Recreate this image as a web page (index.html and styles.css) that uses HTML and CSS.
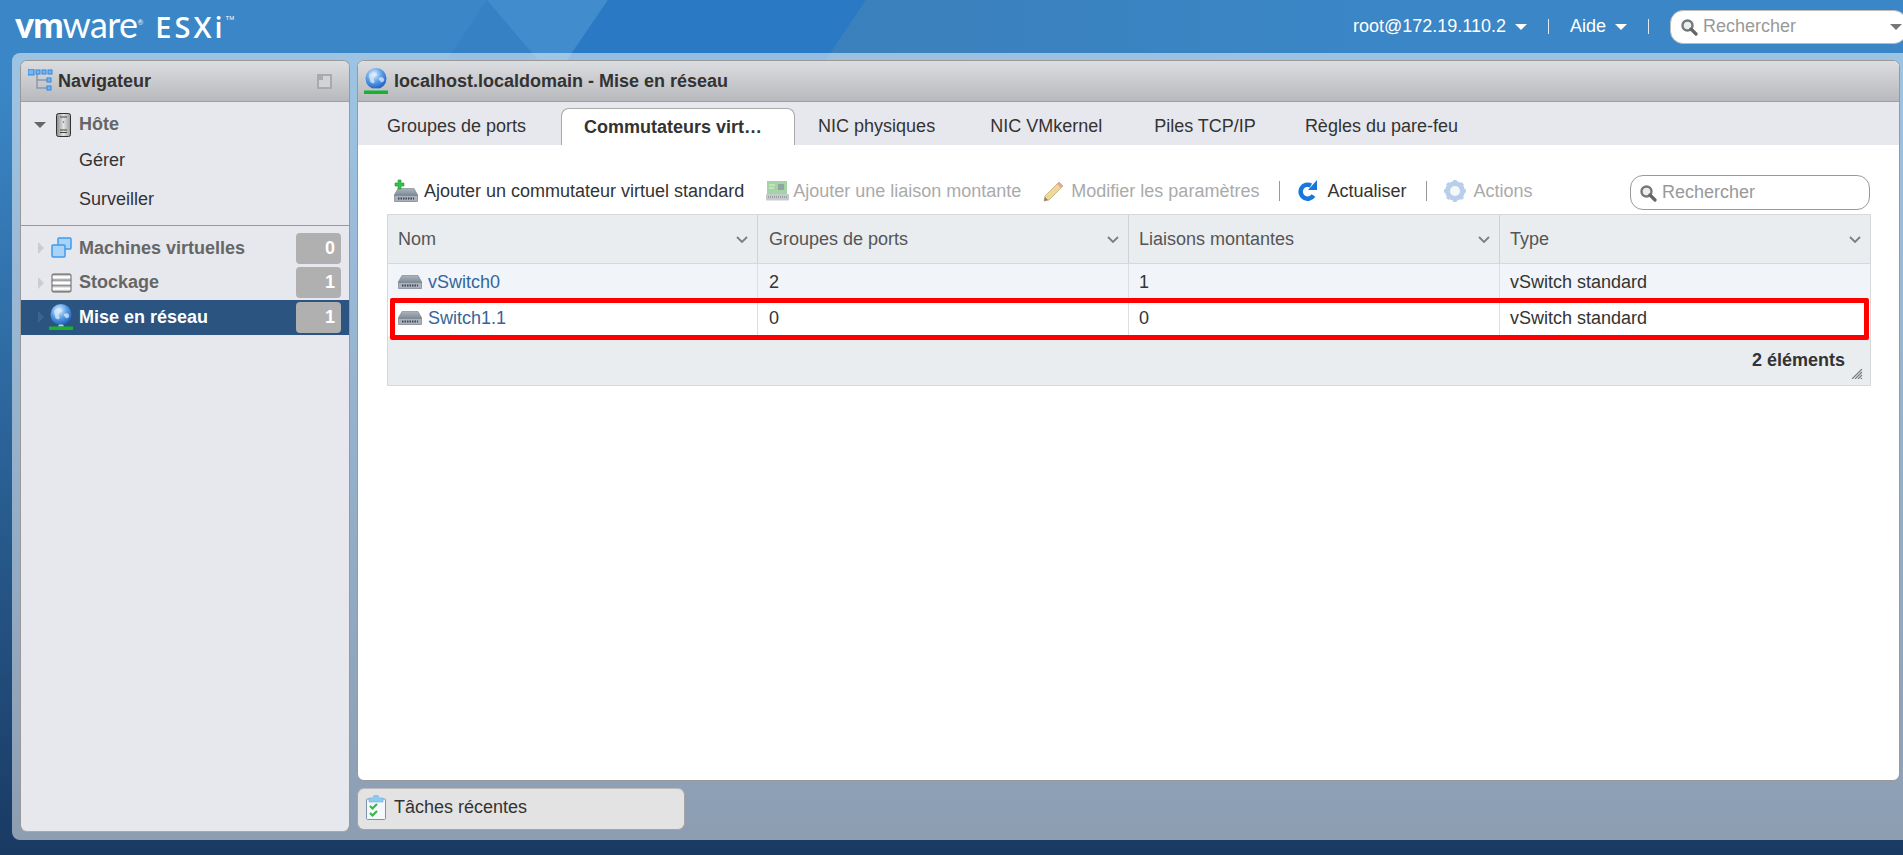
FILE: index.html
```html
<!DOCTYPE html>
<html lang="fr">
<head>
<meta charset="utf-8">
<title>localhost.localdomain - VMware ESXi</title>
<link rel="stylesheet" href="styles.css">
</head>
<body>
<svg class="defs" width="0" height="0" aria-hidden="true">
  <defs>
    <radialGradient id="gGlobe" cx="40%" cy="30%" r="75%"><stop offset="0" stop-color="#e2f0fd"/><stop offset=".5" stop-color="#5a9fe8"/><stop offset="1" stop-color="#1a58bd"/></radialGradient>
    <linearGradient id="gSwitch" x1="0" y1="0" x2="0" y2="1"><stop offset="0" stop-color="#aab3bd"/><stop offset="1" stop-color="#7f8b99"/></linearGradient>
    <linearGradient id="gDisk" x1="0" y1="0" x2="0" y2="1"><stop offset="0" stop-color="#a5a5a5"/><stop offset=".4" stop-color="#ffffff"/><stop offset=".6" stop-color="#ffffff"/><stop offset="1" stop-color="#9a9a9a"/></linearGradient>
    <linearGradient id="gTower" x1="0" y1="0" x2="1" y2="0"><stop offset="0" stop-color="#8a8a8a"/><stop offset=".5" stop-color="#e3e3e3"/><stop offset="1" stop-color="#9a9a9a"/></linearGradient>
    <linearGradient id="gFade" x1="0" y1="0" x2="1" y2="0"><stop offset="0" stop-color="#3a80bc"/><stop offset=".5" stop-color="#3a86c6"/></linearGradient>
    <symbol id="i-search" viewBox="0 0 18 18"><circle cx="7.5" cy="7.5" r="5" fill="#e8eef2" stroke="#777" stroke-width="2.4"/><path d="M11 11l5 5" stroke="#666" stroke-width="3.2" stroke-linecap="round"/></symbol>
    <symbol id="i-globe" viewBox="0 0 24 26">
      <circle cx="12" cy="10.500" r="10.500" fill="url(#gGlobe)"/>
      <path d="M6 6c3-2 6-2 7 0s-2 2-3 4 2 4 0 5-4-1-4-3-2-4 0-6zM15 10c2-1 4-1 5 1s-2 4-3 3-3-3-2-4z" fill="#dcebfa" opacity=".75"/>
      <path d="M10 20.500h4l1 2h-6z" fill="#c6ccd4"/>
      <rect x="0" y="22.500" width="24" height="3.500" fill="#17b32a"/>
    </symbol>
    <symbol id="i-switch" viewBox="0 0 24 14">
      <path d="M4 .5h16L24 7.500H0z" fill="url(#gSwitch)" stroke="#76818e" stroke-width=".6"/>
      <rect x=".3" y="7.300" width="23.400" height="6.400" rx="1" fill="#a9b2bc" stroke="#5f6a77" stroke-width=".6"/>
      <path d="M4 10.500h16" stroke="#3e4650" stroke-width="1.800" stroke-dasharray="1.500 1"/>
    </symbol>
  </defs>
</svg>

<header class="topbar">
  <svg class="decor" width="1903" height="60" viewBox="0 0 1903 60" aria-hidden="true">
    <path d="M487 0L447 60H538z" fill="#3581c3"/>
    <path d="M487 0H608L567 60H538z" fill="#418ccd"/>
    <path d="M608 0H866L826 60H567z" fill="#2a79c5"/>
    <path d="M866 0H1903V60H826z" fill="url(#gFade)"/>
  </svg>
  <div class="logo">
    <span class="logo-vm">vm</span><span class="logo-ware">ware</span><span class="logo-reg">®</span>
    <span class="logo-esxi">ESXi</span><span class="logo-tm">TM</span>
  </div>
  <nav class="topnav">
    <span class="topnav-item">root@172.19.110.2<i class="caret"></i></span>
    <span class="topnav-sep"></span>
    <span class="topnav-item">Aide<i class="caret"></i></span>
    <span class="topnav-sep"></span>
    <div class="topsearch">
      <svg class="ico-search" width="18" height="18"><use href="#i-search"/></svg>
      <span class="placeholder">Rechercher</span>
      <i class="caret caret-grey"></i>
    </div>
  </nav>
</header>

<div class="workspace">
  <aside class="panel nav">
    <div class="panel-head">
      <svg class="ico-tree" width="25" height="24" viewBox="0 0 25 24" aria-hidden="true">
        <path d="M8 3v16h12M8 11h12" fill="none" stroke="#8d98a8" stroke-width="1.500" transform="translate(1 0)"/>
        <rect x="0" y="0" width="6" height="6" fill="#74b6f2" stroke="#2f86e0"/>
        <rect x="8" y="1" width="4" height="4" fill="#74b6f2" stroke="#2f86e0"/>
        <rect x="14" y="1" width="4" height="4" fill="#74b6f2" stroke="#2f86e0"/>
        <rect x="20" y="1" width="4" height="4" fill="#74b6f2" stroke="#2f86e0"/>
        <rect x="19" y="9" width="4" height="4" fill="#74b6f2" stroke="#2f86e0"/>
        <rect x="19" y="17" width="4" height="4" fill="#74b6f2" stroke="#2f86e0"/>
      </svg>
      <span class="panel-title">Navigateur</span>
      <svg class="ico-pin" width="15" height="15" viewBox="0 0 15 15" aria-hidden="true">
        <rect width="15" height="15" fill="#a9aaae"/>
        <path d="M6 2h7v11H2V6h4z" fill="#d2d3d7"/>
      </svg>
    </div>
    <div class="nav-body">
      <div class="nav-group">
        <div class="nav-row nav-host">
          <i class="tri-down"></i>
          <svg class="nav-ico" width="16" height="24" viewBox="0 0 16 24" aria-hidden="true">
            <rect x=".5" y=".5" width="14" height="23" rx="2" fill="url(#gTower)" stroke="#333"/>
            <path d="M4 4h7M4 17h7M4 19.500h7" stroke="#444"/>
            <circle cx="7.500" cy="9" r=".8" fill="#666"/>
          </svg>
          <span class="nav-label">Hôte</span>
        </div>
        <div class="nav-sub">Gérer</div>
        <div class="nav-sub">Surveiller</div>
      </div>
      <div class="nav-list">
        <div class="nav-row">
          <i class="tri-right"></i>
          <svg class="nav-ico" width="22" height="22" viewBox="0 0 22 22" aria-hidden="true">
            <rect x="7" y="1" width="13" height="11" rx="1" fill="#a9d4f7" stroke="#3f9bee" stroke-width="1.500"/>
            <rect x="1" y="8" width="13" height="12" rx="1" fill="#a9d4f7" stroke="#3f9bee" stroke-width="1.500"/>
          </svg>
          <span class="nav-label">Machines virtuelles</span>
          <span class="badge">0</span>
        </div>
        <div class="nav-row">
          <i class="tri-right"></i>
          <svg class="nav-ico" width="21" height="20" viewBox="0 0 21 20" aria-hidden="true">
            <rect x=".5" y=".5" width="20" height="19" rx="2" fill="#666"/>
            <rect x="1.500" y="1.500" width="18" height="5.500" fill="url(#gDisk)"/>
            <rect x="1.500" y="7.200" width="18" height="5.500" fill="url(#gDisk)"/>
            <rect x="1.500" y="12.900" width="18" height="5.600" fill="url(#gDisk)"/>
          </svg>
          <span class="nav-label">Stockage</span>
          <span class="badge">1</span>
        </div>
        <div class="nav-row is-selected">
          <i class="tri-right"></i>
          <svg class="nav-ico nav-ico-globe" width="24" height="26"><use href="#i-globe"/></svg>
          <span class="nav-label">Mise en réseau</span>
          <span class="badge">1</span>
        </div>
      </div>
    </div>
  </aside>

  <div class="maincol">
    <main class="panel main">
      <div class="panel-head">
        <svg class="ico-head-globe" width="24" height="26"><use href="#i-globe"/></svg>
        <span class="panel-title">localhost.localdomain - Mise en réseau</span>
      </div>
      <div class="tabs">
        <span class="tab">Groupes de ports</span>
        <span class="tab tab-active">Commutateurs virt…</span>
        <span class="tab">NIC physiques</span>
        <span class="tab">NIC VMkernel</span>
        <span class="tab">Piles TCP/IP</span>
        <span class="tab">Règles du pare-feu</span>
      </div>
      <div class="content">
        <div class="toolbar">
          <span class="tool">
            <svg class="tool-ico" width="24" height="24" viewBox="0 0 24 24" aria-hidden="true">
              <use href="#i-switch" x="0" y="9" width="24" height="14"/>
              <path d="M4 1h3v3h3v3H7v3H4V7H1V4h3z" fill="#35c24a" stroke="#2a8f3a" stroke-width=".6"/>
            </svg>Ajouter un commutateur virtuel standard</span>
          <span class="tool tool-off tool-uplink">
            <svg class="tool-ico" width="23" height="20" viewBox="0 0 23 20" aria-hidden="true">
              <rect x="1" y="0" width="20" height="13" fill="#a4d3a5"/>
              <rect x="12" y="3" width="6" height="6" fill="#8fa6a0"/>
              <path d="M3 4h6M3 7h5" stroke="#e4f2e4"/>
              <rect x="0" y="13" width="23" height="6.500" rx="1" fill="#c4c9cc"/>
              <path d="M2 16h19" stroke="#9aa0a4" stroke-width="2" stroke-dasharray="1 1"/>
            </svg>Ajouter une liaison montante</span>
          <span class="tool tool-off tool-edit">
            <svg class="tool-ico" width="21" height="21" viewBox="0 0 21 21" aria-hidden="true">
              <path d="M16 1l4 4L6 19l-5 1 1-5z" fill="#f0d79a" stroke="#cdb988"/>
              <path d="M16 1l4 4-2 2-4-4z" fill="#e3a7a0"/>
              <path d="M1 20l1-4 3 3z" fill="#8b8170"/>
            </svg>Modifier les paramètres</span>
          <span class="tool-sep"></span>
          <span class="tool tool-refresh">
            <svg class="tool-ico" width="20" height="22" viewBox="0 0 20 22" aria-hidden="true">
              <path d="M15.500 15.500A7 7 0 1 1 13 5.500" fill="none" stroke="#1877dd" stroke-width="4.500"/>
              <path d="M19 0v10h-9z" fill="#1877dd"/>
            </svg>Actualiser</span>
          <span class="tool-sep tool-sep-last"></span>
          <span class="tool tool-off tool-actions">
            <svg class="tool-ico" width="24" height="24" viewBox="0 0 24 24" aria-hidden="true">
              <circle cx="12" cy="12" r="7.500" fill="none" stroke="#b9cfe9" stroke-width="5"/>
              <path d="M12 1v22M1 12h22M4.200 4.200l15.600 15.600M19.800 4.200L4.200 19.800" stroke="#b9cfe9" stroke-width="3.600"/>
              <circle cx="12" cy="12" r="5" fill="#f4f7fb"/>
            </svg>Actions</span>
          <div class="toolsearch">
            <svg class="ico-search" width="18" height="18"><use href="#i-search"/></svg>
            <span class="placeholder">Rechercher</span>
          </div>
        </div>
        <div class="grid">
          <div class="grid-row grid-head">
            <div class="cell">Nom<svg class="chev" width="12" height="7" viewBox="0 0 12 7"><path d="M1 1l5 5 5-5" fill="none" stroke="#7b7f84" stroke-width="1.800"/></svg></div>
            <div class="cell">Groupes de ports<svg class="chev" width="12" height="7" viewBox="0 0 12 7"><path d="M1 1l5 5 5-5" fill="none" stroke="#7b7f84" stroke-width="1.800"/></svg></div>
            <div class="cell">Liaisons montantes<svg class="chev" width="12" height="7" viewBox="0 0 12 7"><path d="M1 1l5 5 5-5" fill="none" stroke="#7b7f84" stroke-width="1.800"/></svg></div>
            <div class="cell">Type<svg class="chev" width="12" height="7" viewBox="0 0 12 7"><path d="M1 1l5 5 5-5" fill="none" stroke="#7b7f84" stroke-width="1.800"/></svg></div>
          </div>
          <div class="grid-row grid-odd">
            <div class="cell"><svg class="sw-ico" width="24" height="14"><use href="#i-switch"/></svg><a class="link">vSwitch0</a></div>
            <div class="cell">2</div>
            <div class="cell">1</div>
            <div class="cell">vSwitch standard</div>
          </div>
          <div class="grid-row grid-even marked">
            <div class="cell"><svg class="sw-ico" width="24" height="14"><use href="#i-switch"/></svg><a class="link">Switch1.1</a></div>
            <div class="cell">0</div>
            <div class="cell">0</div>
            <div class="cell">vSwitch standard</div>
          </div>
          <div class="grid-foot">2 éléments
            <svg class="grip" width="12" height="10" viewBox="0 0 12 10" aria-hidden="true"><path d="M1 10L11 0M4 10l7-7M7 10l4-4M10 10l1-1" stroke="#777" stroke-width="1.100"/></svg>
          </div>
        </div>
      </div>
    </main>
    <div class="tasks">
      <svg class="ico-tasks" width="20" height="25" viewBox="0 0 20 25" aria-hidden="true">
        <rect x=".5" y="4" width="19" height="20.500" rx="1" fill="#f4f8fb" stroke="#7f93a8"/>
        <path d="M3 3h4l1-2.500h4L13 3h4v4H3z" fill="#8ccaf0" stroke="#6fb0dd" stroke-width=".6"/>
        <path d="M4 11l2.500 2.500L11 9M4 18l2.500 2.500L11 16" fill="none" stroke="#3cb54a" stroke-width="2.200"/>
      </svg>
      <span>Tâches récentes</span>
    </div>
  </div>
</div>
</body>
</html>
```

FILE: styles.css
```css
* { box-sizing: border-box; }
html, body { height: 100%; }
body {
  margin: 0;
  height: 855px;
  overflow: hidden;
  display: flex;
  flex-direction: column;
  position: relative;
  font-family: "Liberation Sans", Arial, sans-serif;
  font-size: 18px;
  color: #333;
  background: linear-gradient(180deg, #3a86c6 0%, #3a86c6 10%, #193a63 100%);
}
.defs { display: block; width: 0; height: 0; }

/* top bar */
.topbar {
  height: 53px;
  flex: none;
  display: flex;
  align-items: center;
  justify-content: space-between;
  padding-left: 15px;
}
.decor { position: absolute; left: 0; top: 0; }
.logo {
  position: relative;
  color: #fff;
  display: flex;
  align-items: baseline;
  height: 40px;
  line-height: 40px;
  margin-top: -6px;
  font-family: Lato, sans-serif;
}
.logo-vm { font-size: 36px; font-weight: 900; letter-spacing: -1px; }
.logo-ware { font-size: 36px; font-weight: 400; letter-spacing: -.6px; }
.logo-reg { font-size: 7px; align-self: flex-start; margin-top: -2px; }
.logo-esxi { font-family: "Open Sans", sans-serif; font-size: 29px; font-weight: 600; letter-spacing: 3px; margin-left: 12px; }
.logo-tm { font-size: 6px; align-self: flex-start; margin-top: -6px; margin-left: 0; font-family: "Liberation Sans", sans-serif; }

.topnav { position: relative; display: flex; align-items: center; color: #fff; }
.topnav-item { display: flex; align-items: center; }
.topnav-sep { width: 1px; height: 15px; background: #dfeaf4; margin: 0 21px; }
.caret {
  display: inline-block;
  width: 0;
  height: 0;
  margin-left: 9px;
  border-left: 6px solid transparent;
  border-right: 6px solid transparent;
  border-top: 6px solid #fff;
}
.caret-grey { border-top-color: #777; margin-left: auto; margin-right: 4px; }
.topsearch {
  display: flex;
  align-items: center;
  width: 237px;
  height: 34px;
  margin-right: -4px;
  padding-left: 9px;
  background: #fff;
  border: 1px solid #bbb;
  border-radius: 13px;
}
.ico-search { flex: none; margin-right: 5px; }
.placeholder { color: #999; }

/* workspace */
.workspace {
  position: relative;
  flex: none;
  height: 787px;
  margin-left: 12px;
  padding: 7px 3px 8px 8px;
  display: flex;
  gap: 7px;
  background: rgba(255, 255, 255, .5);
  border-radius: 8px 0 0 8px;
}
.panel {
  display: flex;
  flex-direction: column;
  border: 1px solid #999;
  border-radius: 7px;
  overflow: hidden;
}
.panel-head {
  flex: none;
  height: 41px;
  display: flex;
  align-items: center;
  background: linear-gradient(180deg, #dcdde1 0%, #b8b9bd 100%);
  border-bottom: 1px solid #a0a0a0;
}
.panel-title { font-weight: 700; color: #333; }

/* navigator */
.nav { width: 330px; flex: none; background: #e7e8ed; border-bottom-color: #aaa; }
.ico-tree { margin-left: 7px; margin-right: 5px; flex: none; }
.ico-pin { margin-left: auto; margin-right: 17px; }
.nav-group { padding-top: 6px; border-bottom: 1px solid #999; height: 124px; }
.nav-list { padding-top: 5px; }
.nav-row {
  position: relative;
  height: 34.500px;
  display: flex;
  align-items: center;
  font-weight: 700;
  color: #666;
}
.nav-host { height: 33px; }
.nav-ico { position: absolute; left: 30px; }
.nav-host .nav-ico { left: 35px; }
.nav-ico-globe { left: 28px; top: 4px; }
.nav-label { position: absolute; left: 58px; }
.nav-sub { height: 39px; line-height: 39px; padding-left: 58px; color: #333; }
.tri-down {
  position: absolute;
  left: 13px;
  width: 0;
  height: 0;
  border-left: 6px solid transparent;
  border-right: 6px solid transparent;
  border-top: 6px solid #666;
}
.tri-right {
  position: absolute;
  left: 17px;
  width: 0;
  height: 0;
  border-top: 6px solid transparent;
  border-bottom: 6px solid transparent;
  border-left: 6px solid #ccc;
}
.is-selected { background: #2b5480; color: #fff; }
.is-selected .tri-right { border-left-color: #3d6592; }
.badge {
  margin-left: auto;
  margin-right: 8px;
  width: 45px;
  height: 31px;
  line-height: 31px;
  padding-right: 6px;
  text-align: right;
  color: #fff;
  background: #b0b0b0;
  border-radius: 4px;
}

/* main */
.maincol { flex: 1; min-width: 0; display: flex; flex-direction: column; gap: 7px; }
.main { height: 721px; flex: none; background: #fff; }
.ico-head-globe { margin-left: 6px; margin-right: 6px; flex: none; }
.tabs {
  flex: none;
  height: 43px;
  padding: 6px 0 0 3px;
  display: flex;
  background: #e7e8ed;
}
.tab { padding: 0 26px; line-height: 36px; }
.tab:nth-child(3) { padding-right: 29px; }
.tab:nth-child(6) { padding-left: 23px; }
.tab-active {
  width: 234px;
  margin: 0 -3px 0 9px;
  padding: 0 22px;
  font-weight: 700;
  white-space: nowrap;
  background: #fff;
  border: 1px solid #aaa;
  border-bottom: 0;
  border-radius: 8px 8px 0 0;
}
.content { padding: 30px 28px 0 29px; }
.toolbar { height: 39px; display: flex; align-items: center; padding-left: 7px; padding-bottom: 7px; }
.tool { display: flex; align-items: center; margin-right: 22px; color: #333; }
.tool-off { color: #aaa; }
.tool-ico { flex: none; margin-right: 6px; }
.tool-uplink .tool-ico { margin-right: 4px; }
.tool-edit .tool-ico { margin-right: 7px; }
.tool-sep { width: 1px; height: 20px; background: #999; flex: none; margin-right: 18px; margin-left: -2px; }
.tool-sep-last { margin-right: 16px; }
.tool-refresh .tool-ico { margin-right: 9px; }
.tool-actions { margin-right: 0; }
.toolsearch {
  margin-left: auto;
  margin-right: 1px;
  align-self: flex-start;
  width: 240px;
  height: 35px;
  display: flex;
  align-items: center;
  padding-left: 8px;
  background: #fff;
  border: 1px solid #999;
  border-radius: 13px;
}

/* grid */
.grid { border: 1px solid #d6d8da; }
.grid-row { display: grid; grid-template-columns: 369px repeat(3, 1fr); }
.cell {
  display: flex;
  align-items: center;
  padding-left: 10px;
  border-left: 1px solid #dcdfe2;
  position: relative;
}
.cell:nth-child(2) { padding-left: 11px; }
.cell:first-child { border-left: 0; }
.grid-head { height: 49px; background: #e9edf0; border-bottom: 1px solid #d6d8da; color: #555; }
.grid-head .cell { border-left-color: #cfd2d5; }
.chev { margin-left: auto; margin-right: 9px; }
.grid-odd { height: 36px; background: #f1f5fa; }
.grid-even { height: 36px; background: #fff; position: relative; z-index: 1; }
.marked::after {
  content: "";
  position: absolute;
  left: 2px;
  right: 1px;
  top: -2px;
  bottom: -4px;
  border: 5px solid #fe0000;
  border-radius: 2px;
  pointer-events: none;
}
.sw-ico { margin-right: 6px; flex: none; }
.link { color: #33669a; }
.grid-foot {
  height: 49px;
  line-height: 49px;
  position: relative;
  text-align: right;
  padding-right: 25px;
  font-weight: 700;
  color: #333;
  background: #e9edf0;
}
.grip { position: absolute; right: 7px; bottom: 6px; }

/* tasks */
.tasks {
  width: 328px;
  height: 42px;
  display: flex;
  align-items: center;
  padding: 0 0 3px 8px;
  gap: 8px;
  background: #e3e3e3;
  border: 1px solid #a4a4a4;
  border-top-color: #bbb;
  border-radius: 7px;
}
```
